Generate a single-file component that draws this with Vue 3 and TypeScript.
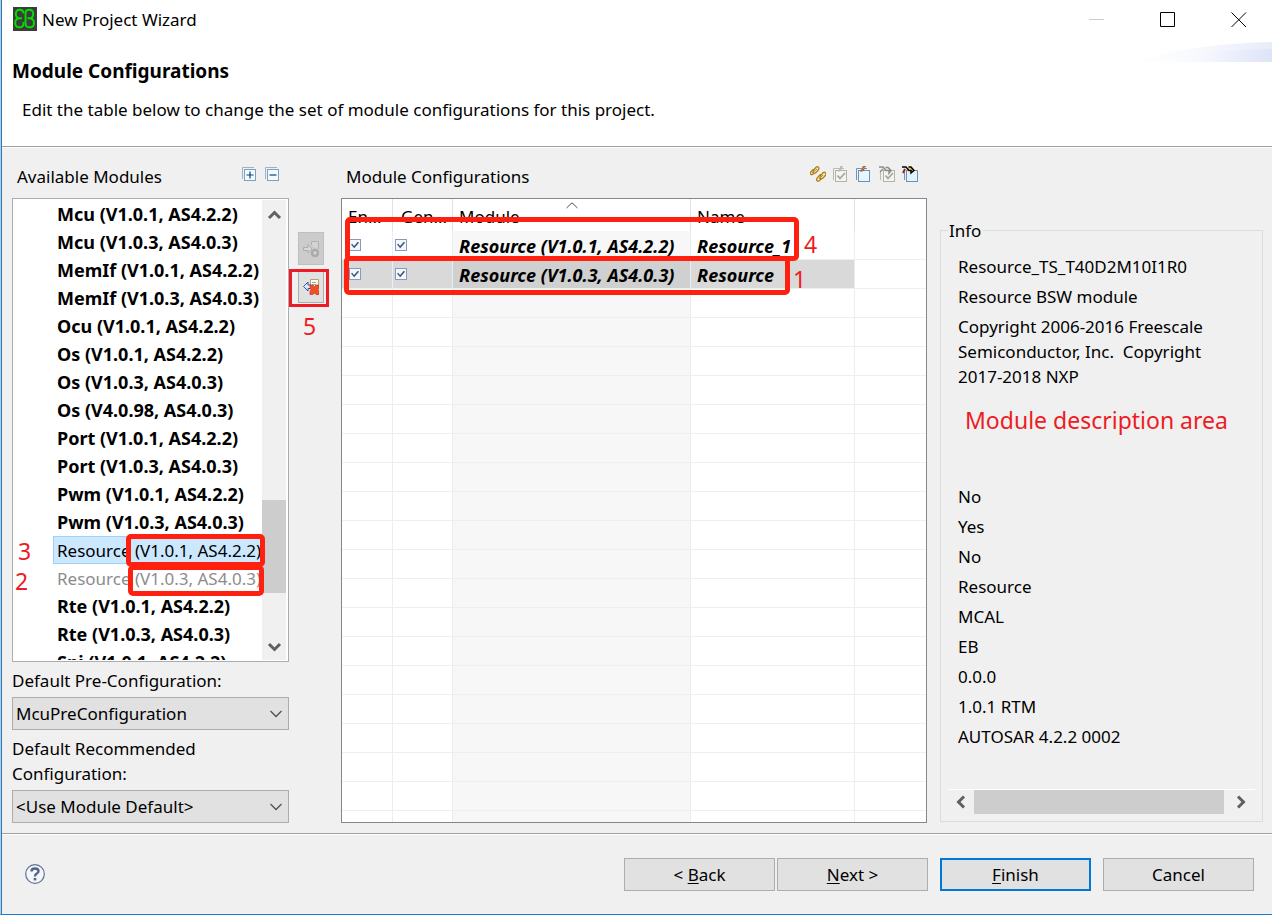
<script setup lang="ts">
import { ref } from 'vue'

interface ModuleItem {
  name: string
  version: string
  state?: 'selected' | 'used'
}

interface ConfigRow {
  module: string
  name: string
  enabled: boolean
  generate: boolean
  selected: boolean
}

const modules: ModuleItem[] = [
  { name: 'Mcu', version: '(V1.0.1, AS4.2.2)' },
  { name: 'Mcu', version: '(V1.0.3, AS4.0.3)' },
  { name: 'MemIf', version: '(V1.0.1, AS4.2.2)' },
  { name: 'MemIf', version: '(V1.0.3, AS4.0.3)' },
  { name: 'Ocu', version: '(V1.0.1, AS4.2.2)' },
  { name: 'Os', version: '(V1.0.1, AS4.2.2)' },
  { name: 'Os', version: '(V1.0.3, AS4.0.3)' },
  { name: 'Os', version: '(V4.0.98, AS4.0.3)' },
  { name: 'Port', version: '(V1.0.1, AS4.2.2)' },
  { name: 'Port', version: '(V1.0.3, AS4.0.3)' },
  { name: 'Pwm', version: '(V1.0.1, AS4.2.2)' },
  { name: 'Pwm', version: '(V1.0.3, AS4.0.3)' },
  { name: 'Resource', version: '(V1.0.1, AS4.2.2)', state: 'selected' },
  { name: 'Resource', version: '(V1.0.3, AS4.0.3)', state: 'used' },
  { name: 'Rte', version: '(V1.0.1, AS4.2.2)' },
  { name: 'Rte', version: '(V1.0.3, AS4.0.3)' },
  { name: 'Spi', version: '(V1.0.1, AS4.2.2)' },
]

const rows = ref<ConfigRow[]>([
  { module: 'Resource (V1.0.1, AS4.2.2)', name: 'Resource_1', enabled: true, generate: true, selected: false },
  { module: 'Resource (V1.0.3, AS4.0.3)', name: 'Resource', enabled: true, generate: true, selected: true },
])

const emptyRows = 19

const info: string[] = [
  'Resource_TS_T40D2M10I1R0',
  'Resource BSW module',
  'Copyright 2006-2016 Freescale Semiconductor, Inc.\u00a0 Copyright 2017-2018 NXP',
  '',
  '',
  '',
  'No',
  'Yes',
  'No',
  'Resource',
  'MCAL',
  'EB',
  '0.0.0',
  '1.0.1 RTM',
  'AUTOSAR 4.2.2 0002',
]

const preConfiguration = ref('McuPreConfiguration')
const recommended = ref('<Use Module Default>')
</script>

<template>
  <div class="window">
    <header class="banner">
      <div class="titlebar">
        <svg class="logo" viewBox="0 0 24 24" aria-hidden="true">
          <rect width="24" height="24" fill="#3c3c3c" />
          <g fill="none" stroke="#00e000" stroke-width="1.900">
            <path d="M10.500 6.500Q10.500 2.800 6.800 2.800Q2.800 2.800 2.800 7Q2.800 11.300 7 11.300H9M7 11.300Q2.200 11.300 2.200 16Q2.200 20.300 6.500 20.300Q10.500 20.300 10.500 16.500V15" />
            <path d="M12.500 6.500Q12.500 2.800 16.200 2.800Q20.200 2.800 20.200 7Q20.200 11.300 16 11.300H14.500M16 11.300Q21 11.300 21 16Q21 20.300 16.800 20.300Q12.500 20.300 12.500 16.500V5.500" />
          </g>
        </svg>
        <span class="caption">New Project Wizard</span>
        <div class="controls">
          <button type="button" aria-label="Minimize" disabled>
            <svg viewBox="0 0 16 16"><path d="M0 8.500H15" stroke="#cccccc" /></svg>
          </button>
          <button type="button" aria-label="Maximize">
            <svg viewBox="0 0 16 16"><path d="M.5 1.500H14.500V15.500H.5Z" fill="none" stroke="#000" /></svg>
          </button>
          <button type="button" aria-label="Close">
            <svg viewBox="0 0 16 16"><path d="M.5 1.500L15 16M15 1.500L.5 16" stroke="#000" /></svg>
          </button>
        </div>
      </div>
      <div class="intro">
        <h1>Module Configurations</h1>
        <p>Edit the table below to change the set of module configurations for this project.</p>
        <svg class="swoosh" viewBox="0 0 136 20" preserveAspectRatio="none" aria-hidden="true">
          <defs>
            <linearGradient id="swooshFill" x1="0" x2="1">
              <stop offset="0" stop-color="#ffffff" />
              <stop offset=".4" stop-color="#f6f8fe" />
              <stop offset="1" stop-color="#dde4f7" />
            </linearGradient>
          </defs>
          <path d="M0 20Q50 2 136 0V20Z" fill="url(#swooshFill)" opacity=".7" />
          <path d="M20 20Q70 8 136 7V20Z" fill="url(#swooshFill)" />
        </svg>
      </div>
    </header>

    <main class="content">
      <section class="available">
        <div class="panel-head">
          <h2>Available Modules</h2>
          <div class="tools">
            <button type="button" aria-label="Expand all">
              <svg viewBox="0 0 16 16">
                <path d="M1.500 13V1.500H13" fill="none" stroke="#9db2c8" />
                <rect x="3.500" y="3.500" width="11" height="11" fill="#f0faff" stroke="#7f9fc0" />
                <path d="M5.500 9H12.500M9 5.500V12.500" stroke="#0b4674" stroke-width="1.200" />
              </svg>
            </button>
            <button type="button" aria-label="Collapse all">
              <svg viewBox="0 0 16 16">
                <path d="M1.500 13V1.500H13" fill="none" stroke="#9db2c8" />
                <rect x="3.500" y="3.500" width="11" height="11" fill="#f0faff" stroke="#7f9fc0" />
                <path d="M5.500 9H12.500" stroke="#0b4674" stroke-width="1.200" />
              </svg>
            </button>
          </div>
        </div>

        <div class="list-wrap">
          <div class="list-box">
            <ul class="list">
              <li v-for="(m, i) in modules" :key="i" :class="m.state">
                <span class="item">{{ m.name }} {{ m.version }}</span>
              </li>
            </ul>
            <div class="vscroll">
              <svg viewBox="0 0 24 24"><path d="M7 18L12.500 12.500L18 18" fill="none" stroke="#606060" stroke-width="3" /></svg>
              <div class="track"><div class="thumb"></div></div>
              <svg viewBox="0 0 24 24"><path d="M7 8L12.500 13.500L18 8" fill="none" stroke="#606060" stroke-width="3" /></svg>
            </div>
          </div>
          <span class="mark frame frame-three"></span>
          <span class="mark frame frame-two"></span>
          <span class="mark digit digit-three">3</span>
          <span class="mark digit digit-two">2</span>
        </div>

        <label class="field-label" for="pre">Default Pre-Configuration:</label>
        <div class="combo">
          <select id="pre" v-model="preConfiguration">
            <option>McuPreConfiguration</option>
          </select>
          <svg viewBox="0 0 12 8"><path d="M.5 1L6 6.500L11.500 1" fill="none" stroke="#505050" stroke-width="1.300" /></svg>
        </div>
        <label class="field-label two-lines" for="rec">Default Recommended Configuration:</label>
        <div class="combo">
          <select id="rec" v-model="recommended">
            <option>&lt;Use Module Default&gt;</option>
          </select>
          <svg viewBox="0 0 12 8"><path d="M.5 1L6 6.500L11.500 1" fill="none" stroke="#505050" stroke-width="1.300" /></svg>
        </div>
      </section>

      <div class="transfer">
        <button type="button" aria-label="Add module configuration" disabled>
          <svg viewBox="0 0 16 16">
            <path d="M8.500 4V.5H15.500V8" fill="#d4d4d4" stroke="#b0b0b0" />
            <path d="M.5 6.500H5V3.500L9 8L5 12V9.500H.5Z" fill="#d8d8d8" stroke="#adadad" />
            <circle cx="12" cy="12" r="3" fill="#d4d4d4" stroke="#aaaaaa" stroke-width="2.500" />
          </svg>
        </button>
        <button type="button" aria-label="Remove module configuration">
          <svg viewBox="0 0 16 16">
            <path d="M7.500 .5H15.500V9H7.500Z" fill="#fdfbe9" stroke="#b7a468" />
            <path d="M9 3.500H13M9 5.500H13" stroke="#8ba5d0" />
            <path d="M.5 7.500L5 3V6H8V9.500H5V12Z" fill="#dce9fb" stroke="#3d4fa8" />
            <path d="M7 6H10L11.500 7.500L13 6H16V8.500L15 10.500L16 12V15.500H13L11.500 14L10 15.500H7V12L8 10.500L7 8.500Z" fill="#f05028" stroke="#c43c10" stroke-width=".7" />
          </svg>
        </button>
        <span class="mark transfer-frame"></span>
        <span class="mark digit digit-five">5</span>
      </div>

      <section class="configs">
        <div class="panel-head">
          <h2>Module Configurations</h2>
          <div class="tools">
            <button type="button" aria-label="Link configurations">
              <svg viewBox="0 0 16 16">
                <g fill="#f3e2ac" stroke="#a87b18" stroke-width="1.200">
                  <ellipse cx="3" cy="6" rx="3.200" ry="1.700" transform="rotate(-50 3 6)" />
                  <ellipse cx="6" cy="4" rx="3.800" ry="1.900" transform="rotate(-50 6 4)" />
                  <ellipse cx="9.500" cy="12" rx="3.800" ry="1.900" transform="rotate(-50 9.500 12)" />
                  <ellipse cx="13" cy="9.500" rx="3.800" ry="1.900" transform="rotate(-50 13 9.500)" />
                </g>
                <path d="M2 7L7 3M9 13L13 9" stroke="#b98c28" />
              </svg>
            </button>
            <button type="button" aria-label="Validate configuration" disabled>
              <svg viewBox="0 0 16 16">
                <path d="M.5 14V2.500H11" fill="none" stroke="#bcbcb4" />
                <rect x="2.500" y="4.500" width="11" height="11" fill="#f4f4f0" stroke="#b2b2aa" />
                <path d="M4.500 9.500L7 12.500L12 7" fill="none" stroke="#a6a6a0" stroke-width="1.800" />
                <path d="M5 6L7.500 0H10L7.500 5Z" fill="#b8b8b0" />
              </svg>
            </button>
            <button type="button" aria-label="New configuration">
              <svg viewBox="0 0 16 16">
                <path d="M.5 14V2.500H11" fill="none" stroke="#7293b8" />
                <rect x="2.500" y="4.500" width="11" height="11" fill="#e7f6fe" stroke="#6f8fb5" />
                <path d="M4 6L7 0H10L7.500 5Z" fill="#9a6048" />
                <path d="M6.500 3L9 1" stroke="#e49a55" />
              </svg>
            </button>
            <button type="button" aria-label="Validate all" disabled>
              <svg viewBox="0 0 16 16">
                <path d="M1.500 14V6" stroke="#bcbcb4" />
                <rect x="4.500" y="4.500" width="11" height="11" fill="#f4f4f0" stroke="#b2b2aa" />
                <path d="M6.500 9.500L9 12.500L14 7" fill="none" stroke="#a6a6a0" stroke-width="1.800" />
                <path d="M0 1H4L7 4.500H10V7L12 4.500L9 1.500H6.500M1 6L4 3" fill="none" stroke="#8c8c86" stroke-width="1.500" />
              </svg>
            </button>
            <button type="button" aria-label="Import configurations">
              <svg viewBox="0 0 16 16">
                <path d="M2.500 14V6" stroke="#7293b8" />
                <rect x="4.500" y="4.500" width="11" height="11" fill="#e2f3fe" stroke="#6f8fb5" />
                <path d="M6 2.500H9L11 4.500" fill="none" stroke="#f0d428" stroke-width="2" />
                <path d="M0 1H4L7 4.500H9V7L12 4.500L9 1H6.500" fill="none" stroke="#000" stroke-width="1.500" />
                <path d="M1 7L3 3" stroke="#8c2c24" stroke-width="2" />
              </svg>
            </button>
          </div>
        </div>

        <div class="table-wrap">
          <div class="table-box">
            <table>
              <colgroup>
                <col class="c-enabled" />
                <col class="c-generate" />
                <col class="c-module" />
                <col class="c-name" />
                <col />
              </colgroup>
              <thead>
                <tr>
                  <th scope="col">En...</th>
                  <th scope="col" class="generate">Gen...</th>
                  <th scope="col">
                    Module
                    <svg class="sort" viewBox="0 0 12 7"><path d="M.5 6L6 .8L11.500 6" fill="none" stroke="#505050" /></svg>
                  </th>
                  <th scope="col">Name</th>
                  <td></td>
                </tr>
              </thead>
              <tbody>
                <tr v-for="(r, i) in rows" :key="i" :class="{ current: r.selected }">
                  <td class="check"><input v-model="r.enabled" type="checkbox" :aria-label="'Enable ' + r.name" /></td>
                  <td class="check narrow"><input v-model="r.generate" type="checkbox" :aria-label="'Generate ' + r.name" /></td>
                  <td class="sorted">{{ r.module }}</td>
                  <td>{{ r.name }}</td>
                  <td class="rest"></td>
                </tr>
                <tr v-for="n in emptyRows" :key="'e' + n">
                  <td></td>
                  <td></td>
                  <td class="sorted"></td>
                  <td></td>
                  <td class="rest"></td>
                </tr>
              </tbody>
            </table>
          </div>
          <span class="mark frame frame-four"></span>
          <span class="mark frame frame-one"></span>
          <span class="mark digit digit-four">4</span>
          <span class="mark digit digit-one">1</span>
        </div>
      </section>

      <fieldset class="info">
        <legend>Info</legend>
        <div class="info-body">
          <p v-for="(line, i) in info" :key="i">{{ line }}</p>
          <span class="mark note">Module description area</span>
        </div>
        <div class="hscroll">
          <svg viewBox="0 0 26 24"><path d="M16 6.500L10.500 12L16 17.500" fill="none" stroke="#606060" stroke-width="3" /></svg>
          <div class="hthumb"></div>
          <svg viewBox="0 0 26 24"><path d="M14 6.500L19.500 12L14 17.500" fill="none" stroke="#606060" stroke-width="3" /></svg>
        </div>
      </fieldset>
    </main>

    <footer class="actions">
      <button type="button" class="help" aria-label="Help">
        <svg viewBox="0 0 20 20">
          <circle cx="10" cy="10" r="9.300" fill="#f4f6fa" stroke="#5d7193" stroke-width="1.200" />
          <path d="M6.500 7.500Q6.500 4.500 10 4.500Q13.500 4.500 13.500 7.200Q13.500 8.800 11.500 9.800Q10 10.600 10 12.500" fill="none" stroke="#4f6488" stroke-width="2.400" />
          <rect x="8.700" y="14" width="2.600" height="2.400" fill="#4f6488" />
        </svg>
      </button>
      <div class="pair">
        <button type="button" class="push">&lt; <u>B</u>ack</button>
        <button type="button" class="push"><u>N</u>ext &gt;</button>
      </div>
      <button type="button" class="push primary"><u>F</u>inish</button>
      <button type="button" class="push">Cancel</button>
    </footer>
  </div>
</template>

<style>
body {
  margin: 0;
}
</style>

<style scoped>
.window {
  box-sizing: border-box;
  display: flex;
  flex-direction: column;
  min-height: 100vh;
  padding-left: 1px;
  border-left: 1px solid #c4c8cc;
  border-bottom: 1px solid #1a7fd0;
  background: linear-gradient(#1a7fd0, #1a7fd0) left / 1px 100% no-repeat #f0f0f0;
  color: #000;
  font: 17px/25px "Noto Sans", "Open Sans", sans-serif;
}

button,
select {
  font: inherit;
  color: inherit;
}

h1,
h2,
p,
ul {
  margin: 0;
  padding: 0;
}

.banner {
  background: #fff;
  border-bottom: 1px solid #a0a0a0;
  box-shadow: 0 1px #fff;
}

.titlebar {
  display: flex;
  align-items: center;
  height: 38px;
  padding-left: 11px;
}

.logo {
  width: 24px;
  height: 24px;
  margin-right: 5px;
}

.controls {
  display: flex;
  margin-left: auto;
}

.controls button {
  display: grid;
  place-items: center;
  width: 71px;
  height: 38px;
  padding: 0 0 0 4px;
  border: 0;
  background: none;
}

.controls svg {
  width: 16px;
  height: 16px;
}

.intro {
  position: relative;
  height: 90px;
  padding: 20px 10px 0;
  box-sizing: content-box;
  height: 88px;
}

h1 {
  font-size: 19px;
  line-height: 26px;
}

.intro p {
  padding: 13px 10px 0;
}

.swoosh {
  position: absolute;
  top: 4px;
  right: 0;
  width: 136px;
  height: 20px;
}

.content {
  flex: 1;
  display: grid;
  grid-template-columns: 277px 26px minmax(0, 1fr) 323px;
  padding: 1px 9px 10px 10px;
}

.available,
.configs {
  display: flex;
  flex-direction: column;
  min-width: 0;
}

.configs {
  margin: 0 13px 0 26px;
}

.panel-head {
  display: flex;
  align-items: center;
  justify-content: space-between;
  height: 50px;
  padding: 0 9px 0 5px;
}

h2 {
  padding-top: 6px;
  font-size: 17px;
  font-weight: 400;
}

.tools {
  display: flex;
  gap: 7px;
  padding-top: 2px;
}

.tools button {
  width: 16px;
  height: 16px;
  padding: 0;
  border: 0;
  background: none;
}

.tools svg {
  display: block;
  width: 16px;
  height: 16px;
}

.list-wrap,
.table-wrap {
  position: relative;
  flex: 1;
  display: flex;
  min-height: 0;
}

.list-box {
  flex: 1;
  display: flex;
  min-width: 0;
  max-height: 460px;
  padding: 1px;
  border: 1px solid #abadb3;
  background: #fff;
}

.list {
  flex: 1;
  min-width: 0;
  overflow: hidden;
  padding-left: 39px;
  list-style: none;
  font-weight: 700;
  font-size: 18px;
}

.list li {
  height: 28px;
  white-space: nowrap;
}

.item {
  display: inline-block;
  box-sizing: border-box;
  height: 28px;
  padding: 0 4px 0 3px;
  border: 1px solid transparent;
  line-height: 27px;
}

.selected,
.used {
  font-weight: 400;
  font-size: 17px;
}

.selected .item {
  border-color: #99d1ff;
  background: #cce8ff;
}

.used {
  color: #8c8c8c;
}

.vscroll {
  display: flex;
  flex-direction: column;
  flex: none;
  width: 24px;
  margin-right: 1px;
  background: #f0f0f0;
}

.vscroll svg {
  width: 24px;
  height: 24px;
}

.track {
  flex: 1;
  display: flex;
  flex-direction: column;
  justify-content: flex-end;
}

.thumb {
  height: 93px;
  margin-bottom: 43px;
  background: #cdcdcd;
}

.field-label {
  padding: 6px 0 4px;
}

.two-lines {
  width: 220px;
}

.combo {
  position: relative;
  display: flex;
}

.combo select {
  flex: 1;
  height: 33px;
  padding: 0 24px 0 3px;
  border: 1px solid #adadad;
  border-radius: 0;
  background: #e1e1e1;
  appearance: none;
}

.combo svg {
  position: absolute;
  top: 13px;
  right: 7px;
  width: 12px;
  height: 8px;
  pointer-events: none;
}

.transfer {
  position: relative;
  display: flex;
  flex-direction: column;
  gap: 5px;
  margin-left: 9px;
  margin-right: -9px;
  padding-top: 84px;
}

.transfer button {
  display: grid;
  place-items: center;
  height: 33px;
  padding: 0;
  border: 1px solid #adadad;
  background: #e1e1e1;
}

.transfer button:disabled {
  border-color: #bfbfbf;
  background: #cccccc;
}

.transfer svg {
  width: 16px;
  height: 16px;
}

.table-box {
  flex: 1;
  min-width: 0;
  height: 623px;
  overflow: hidden;
  border: 1px solid #828790;
  background: #fff;
}

table {
  width: 100%;
  table-layout: fixed;
  border-collapse: separate;
  border-spacing: 0;
}

.c-enabled {
  width: 51px;
}

.c-generate {
  width: 60px;
}

.c-module {
  width: 238px;
}

.c-name {
  width: 164px;
}

th,
thead td {
  position: relative;
  height: 32px;
  padding: 2px 6px 0;
  box-sizing: border-box;
  border-right: 1px solid #e2e2e2;
  font-weight: 400;
  text-align: left;
  white-space: nowrap;
}

th.generate {
  padding-left: 8px;
}

thead td {
  border-right: 0;
}

.sort {
  position: absolute;
  top: 3px;
  left: 50%;
  width: 12px;
  height: 7px;
  margin-left: -6px;
}

tbody td {
  box-sizing: border-box;
  height: 29px;
  padding: 2px 6px 0;
  border-right: 1px solid #e8eef8;
  border-bottom: 1px solid #efefef;
  font-size: 18px;
  font-style: italic;
  font-weight: 700;
  line-height: 26px;
  white-space: nowrap;
}

td.sorted {
  background: #f7f7f7;
}

tbody td.rest {
  border-right: 0;
}

.current td {
  background: #d9d9d9;
}

.current td.sorted {
  background: #d0d0d0;
}

.current td.rest {
  background: #fff;
}

td.check {
  padding: 0 0 0 7px;
}

td.narrow {
  padding-left: 2px;
}

.check input {
  display: block;
  position: relative;
  width: 12px;
  height: 12px;
  margin: 0;
  border: 1px solid #8c9bb5;
  background: #f2f7fb;
  appearance: none;
}

.check input:checked::before {
  content: "";
  position: absolute;
  inset: 1px;
  background: #3f5575;
  clip-path: polygon(0 45%, 15% 35%, 38% 62%, 86% 8%, 100% 22%, 40% 92%);
}

.info {
  display: flex;
  flex-direction: column;
  min-width: 0;
  margin: 70px 0 1px;
  padding: 0 7px 7px;
  border: 1px solid #dcdcdc;
}

.info legend {
  padding: 0 2px 0 1px;
}

.info-body {
  position: relative;
  flex: 1;
  display: flex;
  flex-direction: column;
  gap: 5px;
  padding: 11px 30px 0 10px;
  border-bottom: 1px solid #fff;
}

.info-body p {
  min-height: 25px;
}

.hscroll {
  display: flex;
  height: 24px;
  padding-right: 5px;
}

.hscroll svg {
  width: 26px;
  height: 24px;
}

.hthumb {
  flex: 1;
  background: #cdcdcd;
}

.actions {
  display: flex;
  align-items: center;
  gap: 12px;
  height: 80px;
  padding: 0 18px 0 23px;
  border-top: 1px solid #a0a0a0;
  box-shadow: inset 0 1px #fff;
}

.help {
  width: 20px;
  height: 20px;
  margin-right: auto;
  padding: 0;
  border: 0;
  background: none;
}

.help svg {
  display: block;
}

.pair {
  display: flex;
  gap: 2px;
}

.push {
  width: 151px;
  height: 33px;
  padding: 1px 0 0;
  border: 1px solid #adadad;
  background: #e1e1e1;
}

.primary {
  border: 2px solid #0078d7;
}

u {
  text-underline-offset: 2px;
}

.mark {
  position: absolute;
  color: #ed1c24;
  pointer-events: none;
}

.frame {
  box-sizing: border-box;
  border: 5px solid #ff2010;
  border-radius: 5px;
}

.digit {
  font-size: 23px;
  line-height: 28px;
}

.frame-three {
  top: 336px;
  left: 114px;
  width: 139px;
  height: 33px;
}

.frame-two {
  top: 367px;
  left: 116px;
  width: 136px;
  height: 31px;
}

.digit-three {
  top: 339px;
  left: 6px;
}

.digit-two {
  top: 369px;
  left: 3px;
}

.transfer-frame {
  box-sizing: border-box;
  top: 121px;
  left: -9px;
  width: 40px;
  height: 38px;
  border: 3px solid #ed1c24;
}

.digit-five {
  top: 164px;
  left: 5px;
}

.frame-four {
  top: 19px;
  left: 4px;
  width: 454px;
  height: 44px;
}

.frame-one {
  top: 58px;
  left: 3px;
  width: 446px;
  height: 39px;
}

.digit-four {
  top: 32px;
  left: 463px;
}

.digit-one {
  top: 67px;
  left: 452px;
}

.note {
  top: 163px;
  left: 17px;
  font-size: 23px;
  line-height: 29px;
  white-space: nowrap;
}
</style>
